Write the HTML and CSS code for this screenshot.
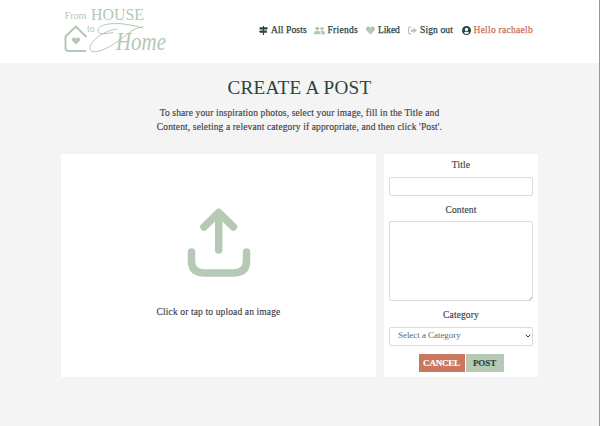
FILE: index.html
```html
<!DOCTYPE html>
<html lang="en">
<head>
<meta charset="utf-8">
<title>From House to Home</title>
<link rel="stylesheet" href="styles.css">
</head>
<body>
<header class="header">
  <a class="brand" aria-label="From House to Home">
    <svg width="108" height="48" viewBox="0 0 108 48">
      <g class="brand-text">
        <text x="1.500" y="10.700" font-size="10.500" textLength="22" lengthAdjust="spacingAndGlyphs">From</text>
        <text x="28" y="12.300" font-size="17" textLength="53" lengthAdjust="spacingAndGlyphs">HOUSE</text>
        <text x="24" y="23.700" font-size="10.500" textLength="8" lengthAdjust="spacingAndGlyphs">to</text>
        <text class="script" x="53" y="42" font-size="25" textLength="50" lengthAdjust="spacingAndGlyphs">Home</text>
      </g>
      <g class="brand-line">
        <path d="M23 28.500 12.800 18.500 2.500 28.500V40q0 3 3 3h17" stroke-width="2"/>
        <path d="M50 24.500C42 26 34 27 35 22C37 13.500 62 14 79 20M54 21C38 23 26 35 27 41C29 48 46 41 62 28C68 23 74 19 80 19" stroke-width="1"/>
      </g>
      <path class="sage" d="M13 36.500 9.500 33C7.600 30.500 11 28 13 30.500c2-2.500 5.400 0 3.500 2.500z"/>
    </svg>
  </a>
  <nav class="nav">
    <a class="nav-item"><svg class="icon dark" viewBox="0 0 16 16"><path d="M7 0h2v2h5l2 2-2 2H9v2h5v4H9v4H7v-4H2l-2-2 2-2h5V6H1V2h6z"/></svg><span>All Posts</span></a>
    <a class="nav-item friends"><svg class="icon wide" viewBox="0 0 20 16"><circle cx="6" cy="4.500" r="3.500"/><circle cx="14.500" cy="4.500" r="3"/><path d="M0 15v-2q0-4 4-4h4q4 0 4 4v2zM13.500 15v-2q0-3-2-4.500h4q4.500 0 4.500 4V15z"/></svg><span>Friends</span></a>
    <a class="nav-item liked"><svg class="icon" viewBox="0 0 16 16"><path d="M8 15 1.300 8.300C-3 3 4-2 8 3c4-5 11 0 6.700 5.300z"/></svg><span>Liked</span></a>
    <a class="nav-item"><svg class="icon" viewBox="0 0 16 16"><path d="M6 1v2H3Q2 3 2 4v8q0 1 1 1h3v2H3q-3 0-3-3V4q0-3 3-3zM10 2.500 16 8l-6 5.500V10H5V6h5z"/></svg><span>Sign out</span></a>
    <a class="nav-item user"><svg class="icon dark" viewBox="0 0 16 16"><path fill-rule="evenodd" d="M8 0a8 8 0 1 0 0 16A8 8 0 0 0 8 0zM8 3a3 3 0 1 1 0 6 3 3 0 0 1 0-6zM3.500 12.500q1-2.500 3-2.500h3q2 0 3 2.500Q8 16 3.500 12.500z"/></svg><span>Hello rachaelb</span></a>
  </nav>
</header>
<main class="main">
  <h1 class="title">CREATE A POST</h1>
  <p class="intro">To share your inspiration photos, select your image, fill in the Title and<br>Content, seleting a relevant category if appropriate, and then click 'Post'.</p>
  <form class="post-form">
    <section class="card upload">
      <svg width="64" height="70" viewBox="0 0 64 70"><path d="M4.500 44v9Q4.500 65 18 65H46Q59.500 65 59.500 53V44M31.700 42V5M17 19 31.700 4.500 46.500 19"/></svg>
      <p class="upload-text">Click or tap to upload an image</p>
    </section>
    <section class="card fields">
      <label class="label" for="title">Title</label>
      <input class="control" id="title">
      <label class="label" for="content">Content</label>
      <textarea class="control area" id="content"></textarea>
      <label class="label" for="category">Category</label>
      <div class="control select" id="category"><span>Select a Category</span><svg width="6" height="6" viewBox="0 0 6 6"><path d="M.8 1.700 3 4 5.200 1.700"/></svg></div>
      <div class="actions"><button class="btn cancel" type="button">CANCEL</button><button class="btn post" type="button">POST</button></div>
    </section>
  </form>
</main>
</body>
</html>
```

FILE: styles.css
```css
* { box-sizing: border-box; }
body {
  margin: 0;
  height: 426px;
  overflow: hidden;
  background: #f4f4f4;
  border-right: 1px solid #999;
  color: #3d4145;
  font: 9.5px/13.5px "Liberation Serif", serif;
  letter-spacing: .13px;
  -webkit-text-stroke: .15px currentColor;
}
.header {
  display: flex;
  height: 63px;
  padding: 8px 0 0 63px;
  background: #fff;
}
.brand { width: 196px; }
.brand svg { display: block; overflow: visible; }
.brand-text { fill: #b3c8b4; letter-spacing: 0; }
.script { font-style: italic; }
.brand-line { fill: none; stroke: #b3c8b4; stroke-linecap: round; stroke-linejoin: round; }
.sage { fill: #b3c8b4; }
.nav {
  display: grid;
  grid-template-columns: 54.5px 52.5px 42px 53.5px 76px;
  height: 14px;
  margin-top: 16px;
  color: #29443f;
  white-space: nowrap;
  -webkit-text-stroke-width: .25px;
}
.nav-item { display: flex; align-items: center; gap: 3px; }
.icon { width: 9px; height: 9px; margin-top: -1px; flex: none; fill: #b3c8b4; }
.icon.wide { width: 11px; }
.icon.dark { fill: #29443f; }
.friends { letter-spacing: .28px; }
.liked { letter-spacing: -.1px; }
.user { color: #cc7057; letter-spacing: .27px; }
.main { width: 477px; margin-left: 61px; }
.title {
  margin: 0;
  padding-top: 12px;
  color: #29443f;
  font-size: 19.2px;
  font-weight: 400;
  line-height: 26px;
  letter-spacing: .25px;
  text-align: center;
  -webkit-text-stroke-width: 0;
}
.intro { margin: 6px 0 20px; text-align: center; }
.post-form { display: flex; gap: 8px; height: 223px; }
.card { display: flex; flex-direction: column; background: #fff; }
.upload { width: 315px; align-items: center; padding-top: 54px; }
.upload svg { fill: none; stroke: #b6c9b5; stroke-width: 7.5; stroke-linecap: round; stroke-linejoin: round; }
.upload-text { margin: 28px 0 0; }
.fields { width: 154px; padding: 5px 5px 0; }
.label { height: 14px; margin-bottom: 3.5px; text-align: center; }
.control {
  width: 144px;
  height: 19px;
  margin: 0 0 8px;
  padding: 0;
  border: 1px solid #d9dce2;
  border-radius: 2px;
  background: #fff;
  flex: none;
}
.area {
  height: 80px;
  resize: none;
  background: linear-gradient(135deg, transparent 55%, #aaa 55%, #aaa 75%, transparent 75%) right bottom / 4px 4px no-repeat #fff;
}
.select {
  display: flex;
  align-items: center;
  justify-content: space-between;
  padding: 0 1px 0 8px;
  color: #62676c;
  font-size: 9px;
  letter-spacing: -.05px;
  -webkit-text-stroke-width: 0;
}
.select svg { fill: none; stroke: #333; stroke-width: 1; }
.actions { display: flex; justify-content: center; gap: 1px; }
.btn {
  height: 18px;
  padding: 0;
  border: 0;
  font: bold 9px/18px "Liberation Serif", serif;
}
.cancel { width: 46px; background: #ca775e; color: #fff; letter-spacing: -.2px; }
.post { width: 38px; background: #b6c9b5; color: #29443f; letter-spacing: -.1px; }
```
